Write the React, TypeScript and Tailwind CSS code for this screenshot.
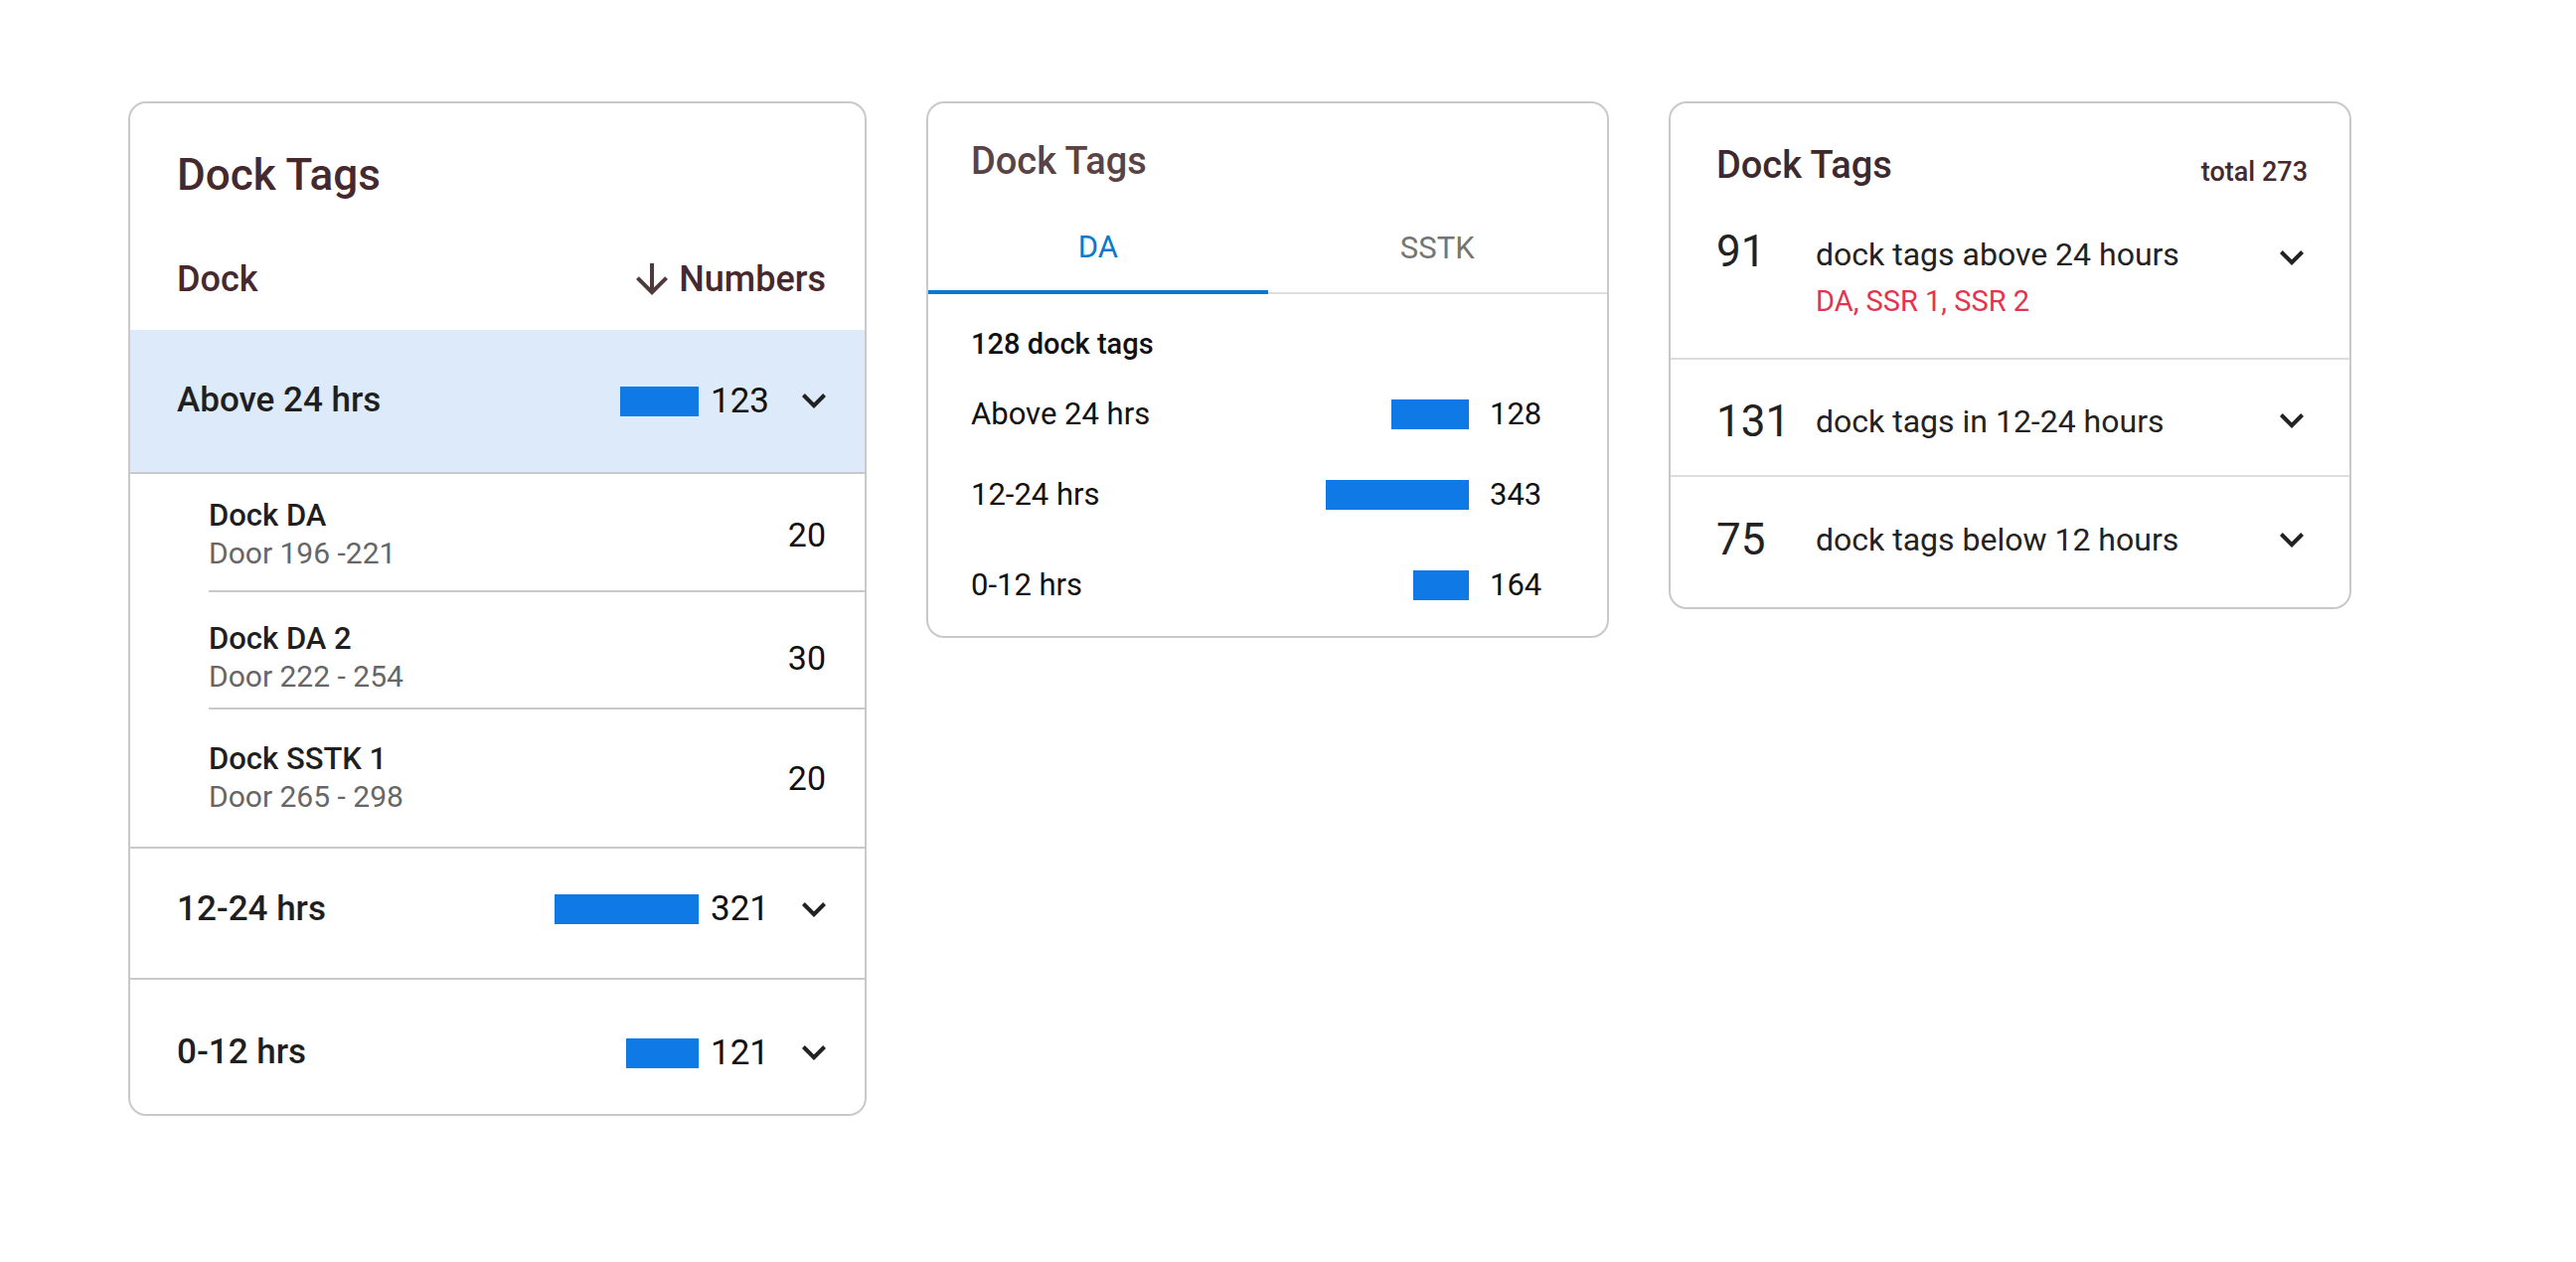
import React from "react";

const Chevron = () => (
  <svg width="24" height="15" viewBox="6 8.59 12 7.41" className="shrink-0 fill-[#222]">
    <path d="M16.59 8.59 12 13.17 7.41 8.59 6 10l6 6 6-6z" />
  </svg>
);

const ArrowDown = () => (
  <svg width="32" height="32" viewBox="4 4 16 16" className="shrink-0 fill-[#4e3a3d]">
    <path d="M20 12l-1.41-1.41L13 16.17V4h-2v12.17l-5.58-5.59L4 12l8 8 8-8z" />
  </svg>
);

const docks = [
  { name: "Dock DA", door: "Door 196 -221", value: 20, cls: "pt-[23px] pb-[18px] border-b-2 border-[#c9c9c9]" },
  { name: "Dock DA 2", door: "Door 222 - 254", value: 30, cls: "pt-[28px] pb-[12px] border-b-2 border-[#c9c9c9]" },
  { name: "Dock SSTK 1", door: "Door 265 - 298", value: 20, cls: "pt-[31px] pb-[31px]" },
];

const BarValue = ({ width, value }: { width: number; value: number }) => (
  <div className="flex items-center">
    <div className="h-[30px] bg-[#0f7ae5]" style={{ width }} />
    <span className="ml-[12px] w-[58px] text-[35px] leading-[40px] text-[#111]">{value}</span>
    <span className="ml-[34px]">
      <Chevron />
    </span>
  </div>
);

const DockTable = () => (
  <div className="w-[743px] overflow-hidden rounded-[18px] border-2 border-[#c9c9c9] bg-white">
    <h2 className="pl-[47px] pt-[46px] text-[44px] font-medium leading-[52px] text-[#45292e]">Dock Tags</h2>
    <div className="mt-[57px] mb-[29px] flex h-[44px] items-center justify-between pl-[47px] pr-[39px] text-[36px] font-medium text-[#45292e]">
      <span>Dock</span>
      <span className="flex items-center gap-[11px]">
        <ArrowDown />
        Numbers
      </span>
    </div>

    <div className="flex h-[145px] items-center justify-between border-b-2 border-[#c9c9c9] bg-[#dceaf9] pl-[47px] pr-[39px]">
      <span className="text-[35px] font-medium text-[#1f1f1f]">Above 24 hrs</span>
      <BarValue width={79} value={123} />
    </div>

    <div className="border-b-2 border-[#c9c9c9] pl-[79px]">
      {docks.map((d) => (
        <div key={d.name} className={`flex items-center justify-between pr-[39px] ${d.cls}`}>
          <div>
            <div className="text-[31px] font-medium leading-[38px] text-[#1f1f1f]">{d.name}</div>
            <div className="text-[30px] leading-[38px] text-[#666]">{d.door}</div>
          </div>
          <span className="text-[34px] text-[#111]">{d.value}</span>
        </div>
      ))}
    </div>

    <div className="flex h-[132px] items-center justify-between border-b-2 border-[#c9c9c9] pb-[8px] pl-[47px] pr-[39px]">
      <span className="text-[35px] font-medium text-[#1f1f1f]">12-24 hrs</span>
      <BarValue width={145} value={321} />
    </div>
    <div className="flex h-[135px] items-center justify-between pt-[12px] pl-[47px] pr-[39px]">
      <span className="text-[35px] font-medium text-[#1f1f1f]">0-12 hrs</span>
      <BarValue width={73} value={121} />
    </div>
  </div>
);

const tabRows = [
  { label: "Above 24 hrs", width: 78, value: 128, cls: "mt-[33px]" },
  { label: "12-24 hrs", width: 144, value: 343, cls: "mt-[41px]" },
  { label: "0-12 hrs", width: 56, value: 164, cls: "mt-[51px]" },
];

const DockTabs = () => (
  <div className="w-[687px] overflow-hidden rounded-[18px] border-2 border-[#c9c9c9] bg-white pb-[31px]">
    <h2 className="pl-[43px] pt-[35px] text-[38px] font-medium leading-[46px] text-[#5a4346]">Dock Tags</h2>
    <div className="mt-[21px] flex h-[90px]">
      <div className="flex flex-1 items-center justify-center border-b-4 border-[#0a78d0] text-[31px] text-[#0a78d0]">
        DA
      </div>
      <div className="flex flex-1 items-center justify-center border-b-2 border-[#dedede] text-[31px] text-[#757575]">
        SSTK
      </div>
    </div>
    <div className="mt-[32px] pl-[43px] text-[29px] font-medium leading-[36px] text-[#111]">128 dock tags</div>
    {tabRows.map((r) => (
      <div key={r.label} className={`flex h-[40px] items-center justify-between pl-[43px] pr-[65px] ${r.cls}`}>
        <span className="text-[31px] text-[#111]">{r.label}</span>
        <div className="flex items-center">
          <div className="h-[30px] bg-[#0f7ae5]" style={{ width: r.width }} />
          <span className="ml-[21px] w-[53px] text-[31px] text-[#111]">{r.value}</span>
        </div>
      </div>
    ))}
  </div>
);

const DockSummary = () => (
  <div className="w-[687px] overflow-hidden rounded-[18px] border-2 border-[#c9c9c9] bg-white">
    <div className="flex items-start justify-between pl-[46px] pr-[42px] pt-[39px]">
      <h2 className="text-[38px] font-medium leading-[46px] text-[#3e2a2e]">Dock Tags</h2>
      <span className="mt-[13px] text-[27px] font-medium leading-[34px] text-[#45292e]">total 273</span>
    </div>

    <div className="mt-[38px] flex items-start border-b-2 border-[#dcdcdc] pb-[39px] pl-[46px] pr-[46px]">
      <span className="w-[100px] text-[44px] leading-[50px] text-[#222]">91</span>
      <div className="mt-[8px] flex-1">
        <div className="text-[32px] leading-[40px] text-[#222]">dock tags above 24 hours</div>
        <div className="mt-[9px] text-[29px] leading-[36px] text-[#e6334d]">DA, SSR 1, SSR 2</div>
      </div>
      <span className="mt-[24px]">
        <Chevron />
      </span>
    </div>

    <div className="flex h-[118px] items-center border-b-2 border-[#dcdcdc] pt-[7px] pl-[46px] pr-[46px]">
      <span className="w-[100px] text-[44px] leading-[50px] text-[#222]">131</span>
      <span className="flex-1 text-[32px] leading-[40px] text-[#222]">dock tags in 12-24 hours</span>
      <Chevron />
    </div>
    <div className="flex h-[131px] items-center pb-[5px] pl-[46px] pr-[46px]">
      <span className="w-[100px] text-[44px] leading-[50px] text-[#222]">75</span>
      <span className="flex-1 text-[32px] leading-[40px] text-[#222]">dock tags below 12 hours</span>
      <Chevron />
    </div>
  </div>
);

export default function App() {
  return (
    <main className="flex min-h-screen items-start gap-[60px] bg-white pl-[129px] pt-[102px] font-['Roboto',sans-serif]">
      <DockTable />
      <DockTabs />
      <DockSummary />
    </main>
  );
}
